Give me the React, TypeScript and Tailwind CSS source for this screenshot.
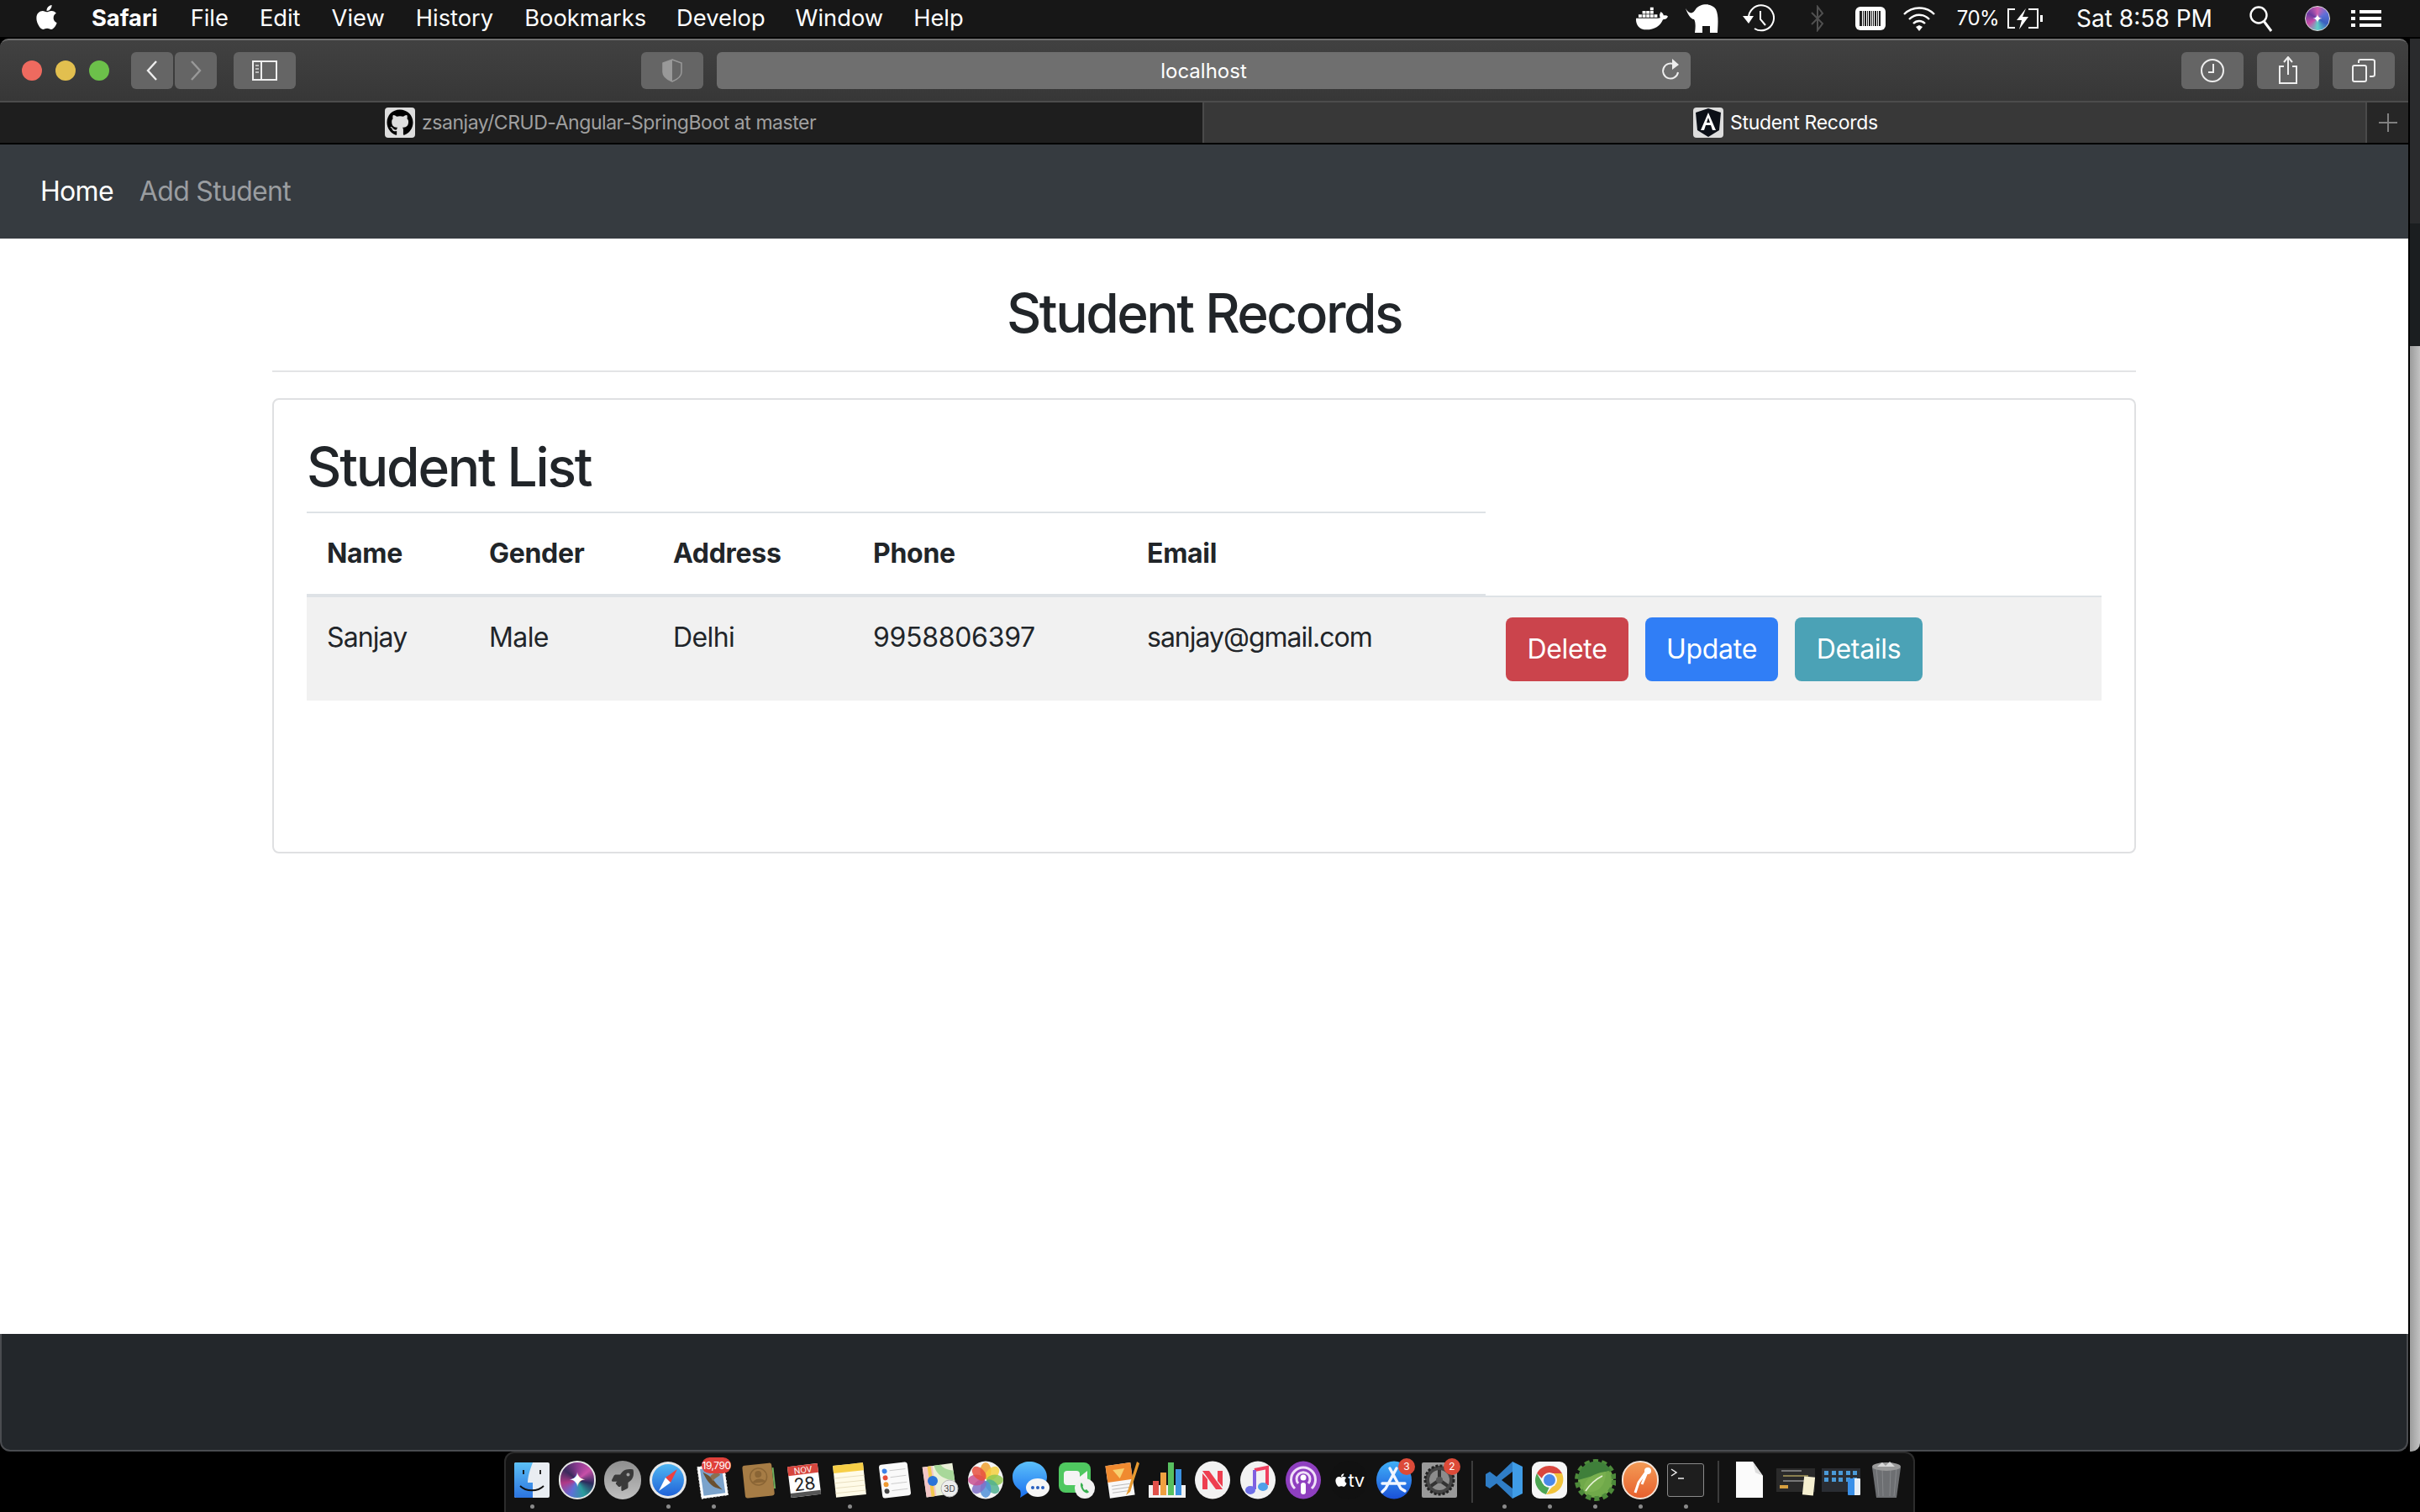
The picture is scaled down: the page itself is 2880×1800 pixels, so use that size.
import React from "react";
import { FaApple, FaDocker, FaGithub, FaRocket } from "react-icons/fa";

const Svg = ({ children, w = 46, h = 46, vb, className = "" }: { children: React.ReactNode; w?: number; h?: number; vb?: string; className?: string }) => (
  <svg width={w} height={h} viewBox={vb ?? `0 0 ${w} ${h}`} className={className} fill="none">
    {children}
  </svg>
);

/* ---------- menu bar ---------- */
const Elephant = () => (
  <Svg w={40} h={36} className="ml-[21px]">
    <path d="M0 6C5 14 9 12 12 7C17 0 31-1 36 7C40 15 38 28 38 35H29V27H20V35H11C12 28 12 22 10 19C6 19 2 12 0 6Z" fill="#fff" />
  </Svg>
);
const TimeMachine = () => (
  <Svg w={38} h={34} className="ml-[28px]">
    <path d="M7 17A15 15 0 1 1 14 29" stroke="#fff" strokeWidth="2" />
    <path d="M0 14H13L7 23Z" fill="#fff" />
    <path d="M21 8V18L27 25" stroke="#fff" strokeWidth="2" />
  </Svg>
);
const Bluetooth = () => (
  <Svg w={18} h={32} className="ml-[42px]">
    <path d="M2 9L15 22L9 30V2L15 10L2 23" stroke="#505050" strokeWidth="2" />
  </Svg>
);
const Barcode = () => (
  <div className="ml-[36px] flex h-[28px] w-[36px] items-center justify-center gap-[1px] rounded-[6px] bg-white">
    {[3, 1, 2, 1, 2, 1, 1, 2, 1, 2].map((v, i) => (
      <div key={i} className="h-[18px] bg-[#222]" style={{ width: v }} />
    ))}
  </div>
);
const Wifi = () => (
  <Svg w={40} h={30} className="ml-[20px]">
    <path d="M2 10C12 0 28 0 38 10M8 16C15 9 25 9 32 16M13 21C17 17 23 17 27 21" stroke="#fff" strokeWidth="2.4" />
    <path d="M16 25L20 23L24 25L20 30Z" fill="#fff" />
  </Svg>
);
const Battery = () => (
  <Svg w={45} h={26} className="ml-[8px]">
    <path d="M11 2H3V24H11M27 2H38V24H27" stroke="#fff" strokeWidth="2" />
    <path d="M41 9H44V17H41Z" fill="#fff" />
    <path d="M24 1L13 15H19L16 26L27 11H20Z" fill="#fff" />
  </Svg>
);
const Search = () => (
  <Svg w={30} h={32} className="ml-[43px]">
    <circle cx="12" cy="12" r="9.5" stroke="#fff" strokeWidth="2.4" />
    <path d="M18 19L27 31" stroke="#fff" strokeWidth="3" />
  </Svg>
);
const SiriSmall = () => (
  <div className="ml-[37px] h-[30px] w-[30px] rounded-full border border-[#ddd] bg-[conic-gradient(#d05fb0,#5f6fd8,#3a5fbf,#5fd0c8,#c84fa8,#6a3aa0,#d05fb0)]">
    <div className="flex h-full w-full items-center justify-center text-[14px] leading-none text-white">✦</div>
  </div>
);
const ListIcon = () => (
  <Svg w={38} h={22} className="ml-[24px]">
    {[1, 9, 17].map((y) => (
      <g key={y} fill="#fff">
        <rect x="1" y={y} width="5" height="4" />
        <rect x="11" y={y} width="26" height="4" />
      </g>
    ))}
  </Svg>
);

const MenuBar = () => (
  <div className="flex h-[46px] shrink-0 items-center border-b-2 border-black bg-[#171717] text-[27.3px] leading-none text-white">
    <FaApple className="ml-[39px] mb-[4px] text-[33px]" />
    <span className="ml-[37px] font-bold">Safari</span>
    <span className="ml-[39px]">File</span>
    <span className="ml-[37px]">Edit</span>
    <span className="ml-[37px]">View</span>
    <span className="ml-[37px]">History</span>
    <span className="ml-[37px]">Bookmarks</span>
    <span className="ml-[36px]">Develop</span>
    <span className="ml-[36px]">Window</span>
    <span className="ml-[36px]">Help</span>
    <div className="ml-auto flex items-center pr-[45px]">
      <FaDocker className="text-[38px]" />
      <Elephant />
      <TimeMachine />
      <Bluetooth />
      <Barcode />
      <Wifi />
      <span className="ml-[25px] text-[24px] tracking-[-0.6px]">70%</span>
      <Battery />
      <span className="ml-[39px] text-[28.1px]">Sat 8:58 PM</span>
      <Search />
      <SiriSmall />
      <ListIcon />
    </div>
  </div>
);

/* ---------- safari chrome ---------- */
const Btn = ({ children, w = 74, className = "" }: { children: React.ReactNode; w?: number; className?: string }) => (
  <div className={`flex h-[44px] items-center justify-center rounded-[6px] bg-[#656565] ${className}`} style={{ width: w }}>
    {children}
  </div>
);

const Toolbar = () => (
  <div className="flex h-[76px] shrink-0 items-center rounded-t-[10px] border-t-2 border-b-2 border-t-[#6e6e6e] border-b-[#4c4c4c] bg-linear-to-b from-[#414141] to-[#373737]">
    <div className="ml-[26px] flex gap-[16px]">
      <div className="h-[24px] w-[24px] rounded-full bg-[#ee6a5f]" />
      <div className="h-[24px] w-[24px] rounded-full bg-[#e2bf4f]" />
      <div className="h-[24px] w-[24px] rounded-full bg-[#6cc04a]" />
    </div>
    <Btn w={50} className="ml-[26px]">
      <Svg w={16} h={26}><path d="M13 2L3 13L13 24" stroke="#eee" strokeWidth="2.4" /></Svg>
    </Btn>
    <Btn w={50} className="ml-[2px]">
      <Svg w={16} h={26}><path d="M3 2L13 13L3 24" stroke="#999" strokeWidth="2.4" /></Svg>
    </Btn>
    <Btn className="ml-[20px]">
      <Svg w={30} h={24}>
        <rect x="1" y="1" width="28" height="22" stroke="#eee" strokeWidth="2" />
        <path d="M11 1V23" stroke="#eee" strokeWidth="2" />
        <path d="M4 6H8M4 10H8M4 14H8" stroke="#bbb" strokeWidth="2" />
      </Svg>
    </Btn>
    <Btn className="ml-[411px]">
      <Svg w={24} h={28}>
        <path d="M12 1L23 5V16C23 21 17 25 12 27C7 25 1 21 1 16V5Z" stroke="#999" strokeWidth="1.5" />
        <path d="M12 1L1 5V16C1 21 7 25 12 27Z" fill="#999" />
      </Svg>
    </Btn>
    <div className="relative ml-[16px] flex h-[44px] w-[1159px] items-center justify-center rounded-[6px] bg-[#6f6f6f] pt-[2px] text-[24px] text-white">
      localhost
      <Svg w={22} h={28} className="absolute right-[13px] top-[8px]">
        <path d="M16 7A9 9 0 1 0 20 16" stroke="#eee" strokeWidth="2" />
        <path d="M13 0L21 7L13 13Z" fill="#eee" />
      </Svg>
    </div>
    <Btn className="ml-[584px]">
      <Svg w={30} h={30}>
        <circle cx="15" cy="15" r="13" stroke="#eee" strokeWidth="2" />
        <path d="M16 7V17H10" stroke="#eee" strokeWidth="2" />
      </Svg>
    </Btn>
    <Btn className="ml-[16px]">
      <Svg w={24} h={34}>
        <path d="M7 12H2V32H22V12H17" stroke="#eee" strokeWidth="2" />
        <path d="M12 22V2M7 7L12 1L17 7" stroke="#eee" strokeWidth="2" />
      </Svg>
    </Btn>
    <Btn className="ml-[16px]">
      <Svg w={28} h={28}>
        <rect x="1" y="8" width="16" height="19" rx="2" stroke="#eee" strokeWidth="2" />
        <path d="M8 5V3C8 2 9 1 10 1H24C26 1 27 2 27 3V19C27 20 26 21 24 21H21" stroke="#eee" strokeWidth="2" />
      </Svg>
    </Btn>
  </div>
);

const AngularFav = () => (
  <div className="flex h-[36px] w-[36px] items-center justify-center rounded-[4px] bg-[#ddd]">
    <Svg w={32} h={36}>
      <path d="M16 1L31 6L29 27L16 35L3 27L1 6Z" fill="#0b0f17" />
      <path d="M16 6L7 27H11L13 21H19L21 27H25ZM14 18L16 12L18 18Z" fill="#fff" />
    </Svg>
  </div>
);

const TabBar = () => (
  <div className="flex h-[50px] shrink-0 border-b-2 border-black text-[23px] leading-none">
    <div className="flex w-[1433px] items-center border-r-2 border-r-[#4a4a4a] bg-[#1e1e1e] pl-[458px] text-[#a0a0a0]">
      <div className="flex h-[36px] w-[36px] items-center justify-center rounded-[4px] bg-[#ddd]">
        <FaGithub className="text-[32px] text-black" />
      </div>
      <span className="ml-[8px] tracking-[-0.45px]">zsanjay/CRUD-Angular-SpringBoot at master</span>
    </div>
    <div className="flex w-[1384px] items-center border-r-2 border-r-[#4a4a4a] bg-[#383838] pl-[582px] text-white">
      <AngularFav />
      <span className="ml-[8px] tracking-[-0.3px]">Student Records</span>
    </div>
    <div className="flex flex-1 items-center justify-center bg-[#262626]">
      <Svg w={24} h={24}><path d="M12 1V23M1 12H23" stroke="#808080" strokeWidth="2" /></Svg>
    </div>
  </div>
);

/* ---------- page ---------- */
const cells = [
  { t: "Sanjay", c: "tracking-[-0.9px]" },
  { t: "Male", c: "tracking-[-0.6px]" },
  { t: "Delhi", c: "tracking-[-0.6px]" },
  { t: "9958806397", c: "tracking-[-0.3px]" },
  { t: "sanjay@gmail.com", c: "tracking-[-1px]" },
];

const Page = () => (
  <div className="flex-1 bg-white text-[#212529]">
    <div className="mx-auto w-[2218px]">
      <h1 className="border-b-2 border-[#e3e4e6] pt-[50px] pb-[30px] text-center text-[64px] font-[550] leading-[77px] tracking-[-2.5px]">Student Records</h1>
      <div className="mt-[31px] h-[542px] rounded-[8px] border-2 border-[#dfe0e2] px-[39px] pt-[41px]">
        <h2 className="mb-[15px] text-[64px] font-[550] leading-[77px] tracking-[-2.2px]">Student List</h2>
        <table className="w-[2136px] table-fixed border-separate border-spacing-0 text-left text-[32px] leading-[48px]">
          <colgroup>
            <col className="w-[193px]" />
            <col className="w-[219px]" />
            <col className="w-[238px]" />
            <col className="w-[326px]" />
            <col className="w-[427px]" />
            <col />
          </colgroup>
          <thead>
            <tr>
              {["Name", "Gender", "Address", "Phone", "Email"].map((h) => (
                <th key={h} className="border-y-2 border-[#dee2e6] p-6 font-bold tracking-[-0.3px]">{h}</th>
              ))}
            </tr>
          </thead>
          <tbody>
            <tr className="bg-[#f1f1f1]">
              {cells.map((c) => (
                <td key={c.t} className={`border-t-2 border-[#dee2e6] p-6 pb-[23px] align-top ${c.c}`}>{c.t}</td>
              ))}
              <td className="border-t-2 border-[#dee2e6] p-6 pb-[23px] align-top">
                <div className="flex gap-[20px] tracking-[-0.3px] text-white">
                  <button className="h-[76px] w-[146px] rounded-[8px] bg-[#cb444c]">Delete</button>
                  <button className="h-[76px] w-[158px] rounded-[8px] bg-[#307ef6]">Update</button>
                  <button className="h-[76px] w-[152px] rounded-[8px] bg-[#4ba2b6]">Details</button>
                </div>
              </td>
            </tr>
          </tbody>
        </table>
      </div>
    </div>
  </div>
);

/* ---------- dock icons ---------- */
const Finder = () => (
  <Svg>
    <defs>
      <linearGradient id="fb" x1="0" y1="0" x2="0" y2="1"><stop stopColor="#5cc0f5" /><stop offset="1" stopColor="#2c74e0" /></linearGradient>
    </defs>
    <rect x="2" y="2" width="42" height="42" rx="2" fill="#e9edf2" />
    <path d="M4 2H24C20 12 18 20 18 26H24V44H4C3 44 2 43 2 42V4C2 3 3 2 4 2Z" fill="url(#fb)" />
    <path d="M13 11V16M33 11V16" stroke="#111" strokeWidth="1.8" />
    <path d="M9 30C16 37 30 37 37 30" stroke="#111" strokeWidth="1.8" />
  </Svg>
);
const Siri = () => (
  <div className="flex h-[46px] w-[44px] items-center justify-center rounded-full border-2 border-[#e6e6e6] bg-[conic-gradient(#8a3a90,#c84fa8,#2c2a5c,#2a9c9c,#5f6fd8,#b03a88,#3a2a5c,#8a3a90)] text-[24px] leading-none text-white">✦</div>
);
const Launchpad = () => (
  <div className="flex h-[46px] w-[44px] items-center justify-center rounded-full bg-linear-to-b from-[#8f8f8f] to-[#c0c0c0]">
    <FaRocket className="text-[26px] text-[#3a3a3a]" />
  </div>
);
const Safari = () => (
  <Svg>
    <defs>
      <linearGradient id="sb" x1="0" y1="0" x2="0" y2="1"><stop stopColor="#4fb6f2" /><stop offset="1" stopColor="#2062d8" /></linearGradient>
    </defs>
    <circle cx="23" cy="23" r="22" fill="#e8e8e8" />
    <circle cx="23" cy="23" r="19" fill="url(#sb)" />
    <path d="M34 10L20 20L26 26Z" fill="#ee4040" />
    <path d="M12 36L20 20L26 26Z" fill="#fff" />
  </Svg>
);
const Mail = () => (
  <div className="relative h-[46px] w-[46px]">
    <Svg>
      <g transform="rotate(-8 23 23)">
        <rect x="6" y="5" width="32" height="38" fill="#fff" stroke="#ddd" strokeDasharray="2 2" />
        <rect x="9" y="8" width="26" height="32" fill="#7ba3cc" />
        <path d="M12 12C18 16 22 20 26 28L32 36L24 32C18 28 14 20 12 12Z" fill="#6a5030" />
        <path d="M20 18C24 14 30 14 32 18C28 20 24 22 22 24Z" fill="#8a7050" />
      </g>
    </Svg>
    <div className="absolute -top-[4px] left-[9px] flex h-[19px] w-[35px] items-center justify-center rounded-full bg-[#e0403a] text-[12px] leading-none tracking-[-0.5px] text-white">19,790</div>
  </div>
);
const Contacts = () => (
  <Svg>
    <g transform="rotate(-6 23 23)">
      <rect x="5" y="4" width="35" height="39" rx="3" fill="#a67c45" />
      <rect x="40" y="10" width="2" height="25" fill="#6fae5a" />
      <circle cx="23" cy="19" r="10" stroke="#8a6535" strokeWidth="1.5" />
      <circle cx="23" cy="16" r="4" fill="#8a6535" />
      <path d="M15 26C17 20 29 20 31 26Z" fill="#8a6535" />
    </g>
  </Svg>
);
const Calendar = () => (
  <Svg>
    <g transform="rotate(-7 23 23)">
      <rect x="5" y="5" width="36" height="37" rx="1" fill="#fff" />
      <path d="M5 37H41V42H5Z" fill="#555" />
      <rect x="5" y="5" width="36" height="11" fill="#d6453d" />
      <text x="23" y="14.5" textAnchor="middle" fontSize="10" fill="#fff" fontFamily="Inter, sans-serif">NOV</text>
      <text x="23" y="35" textAnchor="middle" fontSize="21" fill="#222" fontFamily="Inter, sans-serif">28</text>
    </g>
  </Svg>
);
const Notes = () => (
  <Svg>
    <g transform="rotate(-6 23 23)">
      <rect x="5" y="4" width="36" height="38" fill="#fffbe8" />
      <rect x="5" y="4" width="36" height="9" fill="#f7cf47" />
      <path d="M5 19H41M5 25H41M5 31H41M5 37H41" stroke="#e8dfc0" />
    </g>
  </Svg>
);
const Reminders = () => (
  <Svg>
    <g transform="rotate(-7 23 23)">
      <rect x="6" y="3" width="34" height="40" rx="3" fill="#fafafa" />
      <circle cx="12" cy="11" r="3" fill="#3c82e8" />
      <circle cx="12" cy="19" r="3" fill="#e8503c" />
      <circle cx="12" cy="27" r="3" fill="#f09a30" />
      <circle cx="12" cy="35" r="3" fill="#444" />
      <path d="M18 11H37M18 19H37M18 27H37M18 35H37" stroke="#ccc" />
    </g>
  </Svg>
);
const Maps = () => (
  <Svg>
    <g transform="rotate(-8 23 23)">
      <rect x="4" y="5" width="36" height="36" fill="#eaf0d8" />
      <path d="M4 5H16V41H4Z" fill="#f2c6c6" />
      <path d="M18 5C20 20 32 24 40 26V14C32 12 28 9 26 5Z" fill="#a8d89a" />
      <path d="M12 5V41" stroke="#f2c94c" strokeWidth="4" />
    </g>
    <circle cx="14" cy="24" r="6" fill="#2a74d8" />
    <circle cx="34" cy="33" r="10" fill="#eee" stroke="#bbb" />
    <text x="34" y="37" textAnchor="middle" fontSize="10" fill="#444" fontFamily="Inter, sans-serif">3D</text>
  </Svg>
);
const Photos = () => {
  const colors = ["#f0a030", "#f5d040", "#90c850", "#50b090", "#5090d8", "#8070c8", "#c85090", "#e85040"];
  return (
    <Svg>
      <ellipse cx="23" cy="23" rx="21" ry="22.5" fill="#f4f4f4" />
      {colors.map((c, i) => (
        <ellipse key={c} cx="23" cy="12" rx="6.5" ry="10" fill={c} opacity="0.85" transform={`rotate(${i * 45} 23 23)`} />
      ))}
    </Svg>
  );
};
const Messages = () => (
  <Svg>
    <defs>
      <linearGradient id="mb" x1="0" y1="0" x2="0" y2="1"><stop stopColor="#5cc0fa" /><stop offset="1" stopColor="#1a70f0" /></linearGradient>
    </defs>
    <path d="M21 1C33 1 42 9 42 19C42 29 33 37 21 37L10 44C11 41 11 38 10 35C4 31 1 26 1 19C1 9 10 1 21 1Z" fill="url(#mb)" />
    <ellipse cx="31" cy="32" rx="14" ry="11" fill="#f6f6f6" />
    <circle cx="25" cy="32" r="2" fill="#2a60c0" />
    <circle cx="31" cy="32" r="2" fill="#2a60c0" />
    <circle cx="37" cy="32" r="2" fill="#2a60c0" />
  </Svg>
);
const FaceTime = () => (
  <Svg>
    <rect x="2" y="2" width="38" height="36" rx="8" fill="#4fc860" />
    <rect x="8" y="12" width="19" height="17" rx="4" fill="#f4f4f4" />
    <path d="M27 19L36 12V29L27 23Z" fill="#f4f4f4" />
    <circle cx="33" cy="33" r="12" fill="#f2f2f2" />
    <path d="M29 26C27 28 28 32 31 36C34 39 37 39 38 37L35 34L33 35C31 33 30 31 31 29Z" fill="#38b050" />
  </Svg>
);
const Pages = () => (
  <Svg>
    <g transform="rotate(-8 20 23)">
      <rect x="6" y="4" width="30" height="39" fill="#f8f8f8" />
      <rect x="6" y="4" width="30" height="20" fill="#f08a30" />
      <path d="M14 10H28L21 21Z" fill="#f8d070" />
      <path d="M10 29H32M10 33H32M10 37H32" stroke="#bbb" />
    </g>
    <path d="M41 1L30 36L28 41L33 37L44 3Z" fill="#e89a30" />
  </Svg>
);
const Numbers = () => (
  <Svg>
    <rect x="1" y="29" width="44" height="15" fill="#f2f2f2" />
    <rect x="6" y="24" width="7" height="17" fill="#e0504a" />
    <rect x="15" y="14" width="7" height="27" fill="#f0a040" />
    <rect x="24" y="2" width="7" height="39" fill="#58c060" />
    <rect x="33" y="10" width="7" height="31" fill="#3a90e0" />
  </Svg>
);
const News = () => (
  <Svg>
    <ellipse cx="23" cy="23" rx="21" ry="22.5" fill="#f2f2f2" />
    <path d="M11 12H19L35 34H27ZM11 15L17 22V34H11ZM35 31L29 24V12H35Z" fill="#ee3f50" />
  </Svg>
);
const Music = () => (
  <Svg>
    <ellipse cx="23" cy="23" rx="21" ry="22.5" fill="#f2f2f2" />
    <path d="M19 11L34 8V29" stroke="#f04060" strokeWidth="4" />
    <path d="M19 11V34" stroke="#8060e0" strokeWidth="4" />
    <ellipse cx="14" cy="35" rx="6" ry="5" fill="#7070e8" />
    <ellipse cx="29" cy="31" rx="6" ry="5" fill="#50a0e8" />
  </Svg>
);
const Podcasts = () => (
  <Svg>
    <ellipse cx="23" cy="23" rx="21" ry="22.5" fill="#8f3fc0" />
    <path d="M13 33A14.5 14.5 0 1 1 33 33" stroke="#f0e0f8" strokeWidth="3" />
    <path d="M17 27A8 8 0 1 1 29 27" stroke="#f0e0f8" strokeWidth="3" />
    <circle cx="23" cy="20" r="3.5" fill="#fff" />
    <rect x="20" y="26" width="6" height="14" rx="3" fill="#fff" />
  </Svg>
);
const TV = () => (
  <div className="flex h-[46px] w-[44px] items-center justify-center rounded-full bg-[#111] text-[22px] leading-none text-white">
    <FaApple className="text-[18px]" />
    <span className="tracking-[-0.5px]">tv</span>
  </div>
);
const AppStore = () => (
  <div className="relative h-[46px] w-[46px]">
    <Svg>
      <defs>
        <linearGradient id="ab" x1="0" y1="0" x2="0" y2="1"><stop stopColor="#40b0f8" /><stop offset="1" stopColor="#1a50d8" /></linearGradient>
      </defs>
      <ellipse cx="23" cy="23" rx="21" ry="22.5" fill="url(#ab)" />
      <path d="M26 9L13 33M18 9L31 33M9 27H36M31 33L36 36M13 33L9 37" stroke="#f2f6ff" strokeWidth="3.4" strokeLinecap="round" />
    </Svg>
    <div className="absolute -top-[3px] right-[-2px] flex h-[20px] w-[20px] items-center justify-center rounded-full bg-[#dc4a38] text-[12px] leading-none text-white">3</div>
  </div>
);
const Prefs = () => (
  <div className="relative h-[46px] w-[46px]">
    <Svg>
      <rect x="2" y="2" width="42" height="42" rx="2" fill="#9a9a9a" />
      <circle cx="23" cy="23" r="17" fill="#444" stroke="#222" strokeWidth="3" strokeDasharray="3 2" />
      <circle cx="23" cy="23" r="12" fill="#8c8c8c" />
      <path d="M23 23V11M23 23L13 30M23 23L33 30" stroke="#333" strokeWidth="4" />
      <circle cx="23" cy="23" r="4" fill="#555" />
    </Svg>
    <div className="absolute -top-[3px] right-[-2px] flex h-[20px] w-[20px] items-center justify-center rounded-full bg-[#dc4a38] text-[12px] leading-none text-white">2</div>
  </div>
);
const VsCode = () => (
  <Svg>
    <path d="M33 1L45 7V39L33 45Z" fill="#3f9ce6" />
    <path d="M33 1L14 19L6 13L1 16V30L6 33L14 27L33 45V33L20 23L33 13Z" fill="#2f7dc6" />
  </Svg>
);
const Chrome = () => (
  <Svg>
    <rect x="2" y="1" width="42" height="44" rx="9" fill="#f6f6f6" />
    <path d="M23 6A17 17 0 0 1 38 15H23C18 15 15 18 14 21L8 15C11 9 17 6 23 6Z" fill="#d9473f" />
    <path d="M8 15L15 27C17 30 20 31 23 31L19 40C12 38 6 31 6 23C6 20 7 17 8 15Z" fill="#4da553" />
    <path d="M38 15C40 20 40 26 37 31C34 36 28 40 19 40L27 30C30 28 31 25 31 23C31 20 30 17 28 15Z" fill="#f1c33c" />
    <circle cx="23" cy="23" r="9" fill="#f6f6f6" />
    <circle cx="23" cy="23" r="7" fill="#4a89e8" />
  </Svg>
);
const Spring = () => (
  <Svg w={50} h={52}>
    <circle cx="26" cy="26" r="21" fill="#70a94a" />
    <circle cx="26" cy="26" r="22" stroke="#4d8a3a" strokeWidth="6" strokeDasharray="6 4" />
    <path d="M5 26A21 21 0 0 1 44 14L26 20Z" fill="#3f7f3a" />
    <path d="M12 40C10 28 20 18 38 16C38 32 30 40 20 40C18 40 15 39 12 40Z" fill="#79b04f" />
    <path d="M14 39C20 30 26 25 34 21" stroke="#e8f2d8" strokeWidth="1.5" />
  </Svg>
);
const Postman = () => (
  <div className="flex h-[46px] w-[44px] items-center justify-center rounded-full border-2 border-[#f4e4d8] bg-linear-to-b from-[#f39a55] to-[#e7602e]">
    <Svg w={28} h={34}>
      <path d="M24 3L12 20L8 32M24 3L16 22" stroke="#fff" strokeWidth="3" />
      <circle cx="23" cy="6" r="4" fill="#fff" />
    </Svg>
  </div>
);
const Terminal = () => (
  <div className="relative h-[40px] w-[44px] rounded-[3px] border border-[#8a8a8a] bg-[#1e1e1e]">
    <Svg w={20} h={18} className="ml-[3px] mt-[3px]">
      <path d="M1 3L7 7L1 11" stroke="#eee" strokeWidth="1.5" />
      <path d="M9 14H16" stroke="#eee" strokeWidth="1.5" />
    </Svg>
  </div>
);
const Doc = () => (
  <Svg>
    <path d="M6 1H26L38 18V44H6Z" fill="#fbfbfb" />
    <path d="M26 1L29 14L38 18Z" fill="#ddd" />
  </Svg>
);
const Thumb1 = () => (
  <div className="relative h-[28px] w-[46px] bg-[#2a2a2a]">
    <div className="absolute left-[6px] top-[2px] h-[2px] w-[24px] bg-[#777]" />
    <div className="absolute left-[8px] top-[8px] h-[2px] w-[30px] bg-[#8a8050]" />
    <div className="absolute left-[8px] top-[14px] h-[2px] w-[26px] bg-[#777]" />
    <div className="absolute left-[4px] top-[20px] h-[4px] w-[10px] bg-[#d8a040]" />
    <div className="absolute left-[32px] top-[10px] h-[22px] w-[13px] rotate-6 bg-[#f5efd0]" />
  </div>
);
const Thumb2 = () => (
  <div className="relative h-[28px] w-[46px] bg-[#2a2d33]">
    <div className="grid grid-cols-5 gap-[3px] p-[3px]">
      {Array.from({ length: 10 }).map((_, i) => (
        <div key={i} className="h-[5px] w-[5px] bg-[#4a9ad8]" />
      ))}
    </div>
    <div className="absolute left-[31px] top-[12px] h-[20px] w-[15px] rounded-[1px] bg-linear-to-r from-[#3a90e8] from-50% to-[#e8eef5] to-50%" />
  </div>
);
const Trash = () => (
  <Svg>
    <path d="M6 8L11 44H35L40 8Z" fill="#6d6f72" />
    <path d="M11 8L14 42M18 8L19 42M28 8L27 42M35 8L32 42" stroke="#85878a" />
    <ellipse cx="23" cy="7" rx="17" ry="5" fill="#999" />
    <path d="M12 7L18 2L22 6L27 1L33 7Z" fill="#d8d8d8" />
  </Svg>
);

const Slot = ({ children, dot = false }: { children: React.ReactNode; dot?: boolean }) => (
  <div className="flex w-[54px] flex-col items-center">
    <div className="flex h-[46px] items-center justify-center">{children}</div>
    <div className={`mt-[6px] h-[5px] w-[5px] rounded-full ${dot ? "bg-[#8a8a8a]" : "bg-transparent"}`} />
  </div>
);
const Divider = () => (
  <div className="flex w-[23px] justify-center">
    <div className="h-[50px] w-[2px] bg-[#3c3c3c]" />
  </div>
);

const Dock = () => (
  <div className="flex h-[72px] shrink-0 justify-center pr-[1px] bg-black">
    <div className="flex w-[1679px] items-start rounded-t-[12px] border-x-2 border-t-2 border-[#2c2c2c] bg-[#121212] pl-[4px] pt-[9px]">
      <Slot dot><Finder /></Slot>
      <Slot><Siri /></Slot>
      <Slot><Launchpad /></Slot>
      <Slot dot><Safari /></Slot>
      <Slot dot><Mail /></Slot>
      <Slot><Contacts /></Slot>
      <Slot><Calendar /></Slot>
      <Slot dot><Notes /></Slot>
      <Slot><Reminders /></Slot>
      <Slot><Maps /></Slot>
      <Slot><Photos /></Slot>
      <Slot><Messages /></Slot>
      <Slot><FaceTime /></Slot>
      <Slot><Pages /></Slot>
      <Slot><Numbers /></Slot>
      <Slot><News /></Slot>
      <Slot><Music /></Slot>
      <Slot><Podcasts /></Slot>
      <Slot><TV /></Slot>
      <Slot><AppStore /></Slot>
      <Slot><Prefs /></Slot>
      <Divider />
      <Slot dot><VsCode /></Slot>
      <Slot dot><Chrome /></Slot>
      <Slot dot><Spring /></Slot>
      <Slot dot><Postman /></Slot>
      <Slot dot><Terminal /></Slot>
      <Divider />
      <Slot><Doc /></Slot>
      <Slot><Thumb1 /></Slot>
      <Slot><Thumb2 /></Slot>
      <Slot><Trash /></Slot>
    </div>
  </div>
);

export default function App() {
  return (
    <div className="flex h-[1800px] w-[2880px] flex-col overflow-hidden bg-black font-[Inter,sans-serif]">
      <MenuBar />
      <div className="flex min-h-0 flex-1">
        <div className="flex w-[2866px] flex-col">
          <Toolbar />
          <TabBar />
          <nav className="flex h-[112px] shrink-0 items-center gap-[31px] bg-[#363b40] pl-[48px] text-[32px] tracking-[-0.7px]">
            <span className="text-white">Home</span>
            <span className="text-[#9a9da0]">Add Student</span>
          </nav>
          <Page />
          <footer className="h-[140px] shrink-0 rounded-b-[12px] border-x-2 border-b-2 border-t-0 border-[#4a4c50] bg-[#23272b]" />
        </div>
        <div className="flex w-[14px] flex-col border-l-2 border-black">
          <div className="h-[220px] bg-[#2a2b2d]" />
          <div className="h-[146px] bg-[#1b1e20]" />
          <div className="flex-1 rounded-br-[10px] bg-linear-to-r from-[#9c9c9c] to-[#c2c2c2]" />
        </div>
      </div>
      <Dock />
    </div>
  );
}
